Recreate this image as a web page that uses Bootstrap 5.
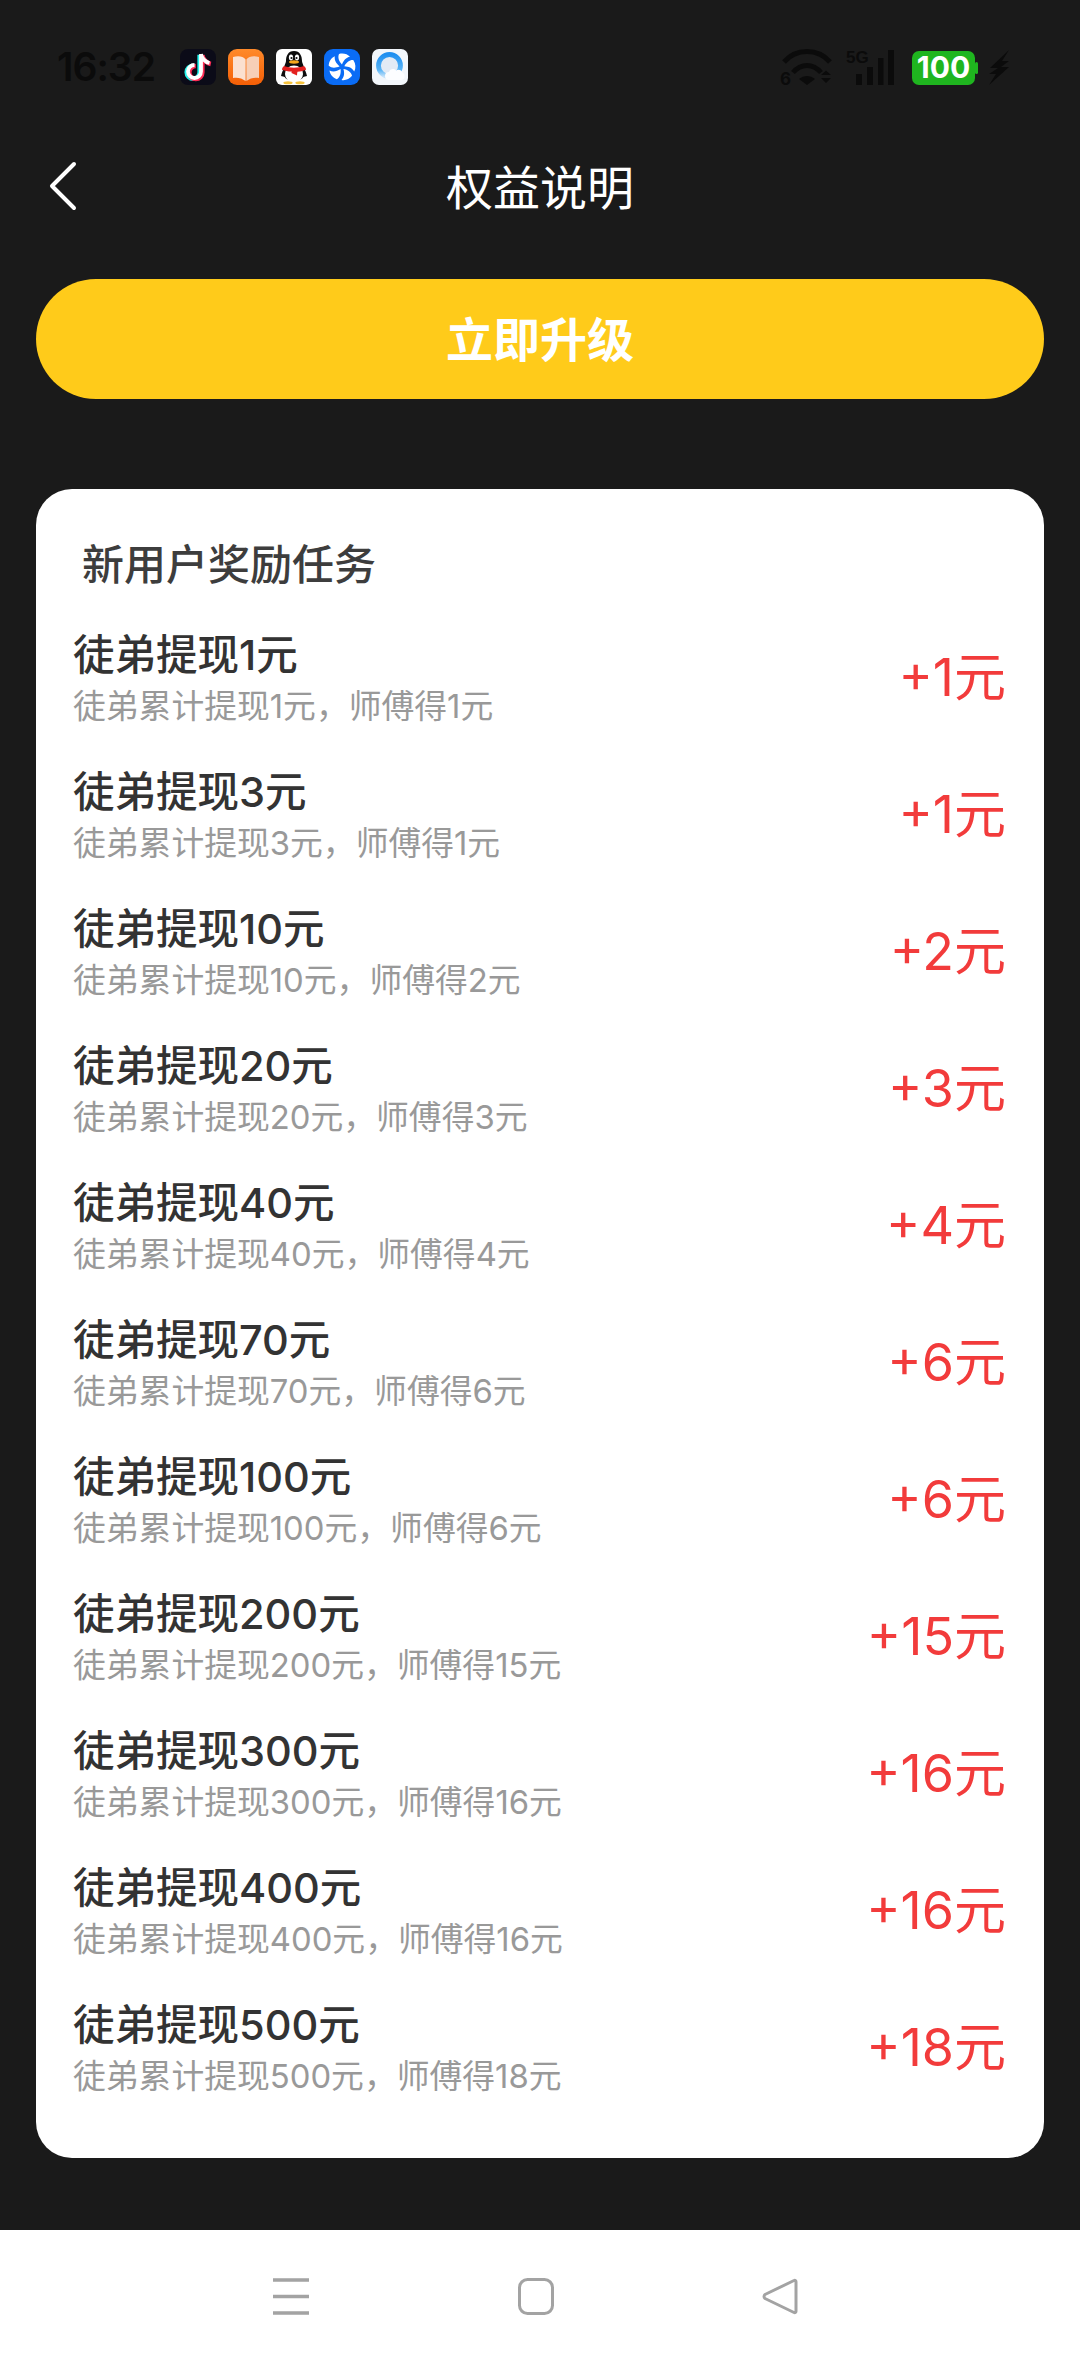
<!DOCTYPE html>
<html lang="zh-CN">
<head>
  <meta charset="UTF-8" />
  <meta name="viewport" content="width=device-width, initial-scale=1.0"/>
  <title>权益说明</title>
  <link href="https://cdn.jsdelivr.net/npm/bootstrap@5.3.3/dist/css/bootstrap.min.css" rel="stylesheet">
  <style>
    html, body { height: 100%; }
    body {
      background: #1a1a1a;
      font-family: Inter, "Noto Sans CJK SC", sans-serif;
      display: flex;
      flex-direction: column;
    }
    .status-row { padding: 49px 70px 0 57px; height: 85px; color: #0b0b0b; }
    .status-time { font-size: 39px; font-weight: 600; line-height: 36px; width: 123px; letter-spacing: -1px; }
    .app-icons { gap: 12px; }
    .app-icons svg { width: 36px; height: 36px; display: block; }
    .status-glyphs { overflow: visible; }
    .head-row { display: grid; grid-template-columns: 1fr auto 1fr; align-items: center; height: 94px; margin-top: 52px; margin-bottom: 48px; padding: 0 48px; }
    .head-back { padding-top: 3px; }
    .head-title { color: #fff; font-size: 47px; font-family: "Noto Sans CJK SC", sans-serif; font-weight: 400; margin: 0; line-height: 1; }
    .upgrade-btn {
      display: block;
      margin: 0 36px 90px;
      height: 120px;
      padding: 0 0 3px;
      background: #ffcb1a;
      border: 0;
      color: #fff;
      font-size: 47px;
      font-weight: 700;
      font-family: "Noto Sans CJK SC", sans-serif;
      border-radius: 60px;
    }
    .task-panel { margin: 0 36px; height: 1669px; border: 0; border-radius: 36px; padding: 46px 38px 0 38px; }
    .task-head { font-size: 42px; line-height: 54px; color: #3d3d3d; font-weight: 500; padding-left: 8px; margin-bottom: 22px; font-family: "Noto Sans CJK SC", sans-serif; }
    .task-row { height: 137px; }
    .task-row > div:first-child { margin-left: -1px; }
    .task-name { font-size: 41.5px; line-height: 52px; color: #333; font-weight: 500; }
    .task-desc { font-size: 32.8px; line-height: 50px; color: #999; }
    .task-amount { font-size: 52px; color: #f23b3b; line-height: 1; padding-bottom: 3px; }
    .nav-strip { margin-top: auto; height: 132px; background: #fff; padding: 48px 282px 0 273px; }
    .nav-strip svg { display: block; }
  </style>
</head>
<body>

  <!-- status bar -->
  <div class="status-row d-flex align-items-center">
    <div class="status-time">16:32</div>
    <div class="app-icons d-flex">
      <svg viewBox="0 0 36 36"><rect width="36" height="36" rx="8" fill="#0b0b18"/><g fill="none" stroke-width="4.600"><path d="M21 5v17.500a6.500 6.500 0 1 1-6.500-6.500" stroke="#25f4ee" transform="translate(-1.300 .8)"/><path d="M21 5v17.500a6.500 6.500 0 1 1-6.500-6.500M21 5c.5 4 4 8 8.500 9" stroke="#fe2c55" transform="translate(1.300 1)"/><path d="M21 5v17.500a6.500 6.500 0 1 1-6.500-6.500M21 5c.5 4 4 8 8.500 9" stroke="#fff" stroke-width="3.800"/></g></svg>
      <svg viewBox="0 0 36 36"><defs><linearGradient id="bk" x1="0" y1="0" x2="0" y2="1"><stop offset="0" stop-color="#ff8a2a"/><stop offset="1" stop-color="#f45f06"/></linearGradient></defs><rect width="36" height="36" rx="9" fill="url(#bk)"/><path d="M5 8c5-1.500 10-1 12.600 2.500V32C14 29 9 28 5 29z" fill="#fbe0d0"/><path d="M31 8c-5-1.500-10-1-12.600 2.500V32C22 29 27 28 31 29z" fill="#f7cfb6"/></svg>
      <svg viewBox="0 0 36 36"><rect width="36" height="36" rx="6" fill="#fff"/><path d="M18 2c6 0 8 5 8 10 0 2 3 7 3 11 0 5-4 9-11 9S7 28 7 23c0-4 3-9 3-11C10 7 12 2 18 2z" fill="#0d0d0d"/><path d="M5 27c1-4 2-6 3-8l3 1-2 8zM31 27c-1-4-2-6-3-8l-3 1 2 8z" fill="#0d0d0d"/><ellipse cx="18" cy="25" rx="9" ry="8.500" fill="#fff"/><ellipse cx="15" cy="8.500" rx="2.100" ry="2.900" fill="#fff"/><ellipse cx="21" cy="8.500" rx="2.100" ry="2.900" fill="#fff"/><circle cx="15.500" cy="9" r="1.100" fill="#111"/><circle cx="20.500" cy="9" r="1.100" fill="#111"/><ellipse cx="18" cy="13" rx="5" ry="1.700" fill="#f5a81c"/><path d="M8 17c6.500 2.300 13.500 2.300 20 0 1 .8 2 2.200 2 3.700-3 1.300-6 2-8.500 2l-.3 1.300-.2 2.500-5.500-2.500.2-1.500C12 22.500 9 21.800 6 20.700c0-1.500 1-3 2-3.700z" fill="#e3201f"/><ellipse cx="12" cy="33.800" rx="4.600" ry="1.500" fill="#f5c23c"/><ellipse cx="24" cy="33.800" rx="4.600" ry="1.500" fill="#f5c23c"/></svg>
      <svg viewBox="0 0 36 36"><rect width="36" height="36" rx="9" fill="#0a6cf5"/><g fill="#fff"><path id="pw" d="M18 15.500C15 12.500 13.500 8.500 15 5c4-1.200 8.500 0 11 2.800C22 8.500 19.500 11.500 18 15.500z"/><use href="#pw" transform="rotate(72 18 18)"/><use href="#pw" transform="rotate(144 18 18)"/><use href="#pw" transform="rotate(216 18 18)"/><use href="#pw" transform="rotate(288 18 18)"/></g></svg>
      <svg viewBox="0 0 36 36"><defs><linearGradient id="rg" x1="0" y1="0" x2="0" y2="1"><stop offset="0" stop-color="#1f8ff0"/><stop offset=".7" stop-color="#59b4f6"/><stop offset="1" stop-color="#c4e2fa"/></linearGradient></defs><rect width="36" height="36" rx="7" fill="#f2f6fb"/><circle cx="17.500" cy="16.500" r="11" fill="#e2eaf5" stroke="url(#rg)" stroke-width="4.800"/><path d="M17 31a4 4 0 0 1 0-8c.8-3 5-4 7-1.500 2-1.500 6-.5 6.500 2.500 3 .5 3 7-1 7z" fill="#fcfdff"/></svg>
    </div>
    <div class="ms-auto d-flex align-items-center">
      <svg width="230" height="38" viewBox="0 0 230 38" class="d-block status-glyphs">
        <!-- wifi -->
        <g fill="none" stroke="#0b0b0b" stroke-width="5">
          <path d="M4 14C16 0 38 0 50 14"/>
          <path d="M13 24.500C21 15 33 15 41 24.500"/>
        </g>
        <path d="M19 31C24 27 30 27 35 31L27 37z" fill="#0b0b0b"/>
        <text x="0" y="37" font-size="17" font-weight="700" fill="#0b0b0b" font-family="Inter">6</text>
        <path d="M41 27l5-4.500 5 4.500zM41 30h10l-5 5z" fill="#0b0b0b"/>
        <!-- 5g and bars -->
        <text x="66" y="15" font-size="17" font-weight="700" fill="#0b0b0b" font-family="'Liberation Sans'">5G</text>
        <rect x="76" y="26" width="6" height="11" fill="#0b0b0b"/>
        <rect x="87" y="19" width="6" height="18" fill="#0b0b0b"/>
        <rect x="98" y="10" width="5.500" height="27" fill="#0b0b0b"/>
        <rect x="108" y="2" width="6" height="35" fill="#0b0b0b"/>
        <!-- battery -->
        <rect x="132" y="3" width="63" height="34" rx="7" fill="#1fb51f"/>
        <rect x="195" y="14" width="3" height="12" rx="1.500" fill="#1fb51f"/>
        <text x="163.500" y="30" font-size="30" font-weight="700" fill="#fff" text-anchor="middle" font-family="Inter">100</text>
        <!-- bolt -->
        <path d="M229 2L210 20h8l-9 6h7l-7 11 20-18h-8l8-6h-7z" fill="#0b0b0b"/>
      </svg>
    </div>
  </div>

  <!-- header -->
  <div class="head-row">
    <div class="head-back">
      <svg width="30" height="52" viewBox="0 0 30 52" class="d-block"><path d="M26 4L4 26l22 22" fill="none" stroke="#fff" stroke-width="4" stroke-linecap="round" stroke-linejoin="round"/></svg>
    </div>
    <h1 class="head-title">权益说明</h1>
    <div></div>
  </div>

  <button type="button" class="btn upgrade-btn">立即升级</button>

  <div class="card task-panel">
    <div class="task-head">新用户奖励任务</div>

    <div class="task-row d-flex justify-content-between align-items-center">
      <div><div class="task-name">徒弟提现1元</div><div class="task-desc">徒弟累计提现1元，师傅得1元</div></div>
      <div class="task-amount">+1元</div>
    </div>
    <div class="task-row d-flex justify-content-between align-items-center">
      <div><div class="task-name">徒弟提现3元</div><div class="task-desc">徒弟累计提现3元，师傅得1元</div></div>
      <div class="task-amount">+1元</div>
    </div>
    <div class="task-row d-flex justify-content-between align-items-center">
      <div><div class="task-name">徒弟提现10元</div><div class="task-desc">徒弟累计提现10元，师傅得2元</div></div>
      <div class="task-amount">+2元</div>
    </div>
    <div class="task-row d-flex justify-content-between align-items-center">
      <div><div class="task-name">徒弟提现20元</div><div class="task-desc">徒弟累计提现20元，师傅得3元</div></div>
      <div class="task-amount">+3元</div>
    </div>
    <div class="task-row d-flex justify-content-between align-items-center">
      <div><div class="task-name">徒弟提现40元</div><div class="task-desc">徒弟累计提现40元，师傅得4元</div></div>
      <div class="task-amount">+4元</div>
    </div>
    <div class="task-row d-flex justify-content-between align-items-center">
      <div><div class="task-name">徒弟提现70元</div><div class="task-desc">徒弟累计提现70元，师傅得6元</div></div>
      <div class="task-amount">+6元</div>
    </div>
    <div class="task-row d-flex justify-content-between align-items-center">
      <div><div class="task-name">徒弟提现100元</div><div class="task-desc">徒弟累计提现100元，师傅得6元</div></div>
      <div class="task-amount">+6元</div>
    </div>
    <div class="task-row d-flex justify-content-between align-items-center">
      <div><div class="task-name">徒弟提现200元</div><div class="task-desc">徒弟累计提现200元，师傅得15元</div></div>
      <div class="task-amount">+15元</div>
    </div>
    <div class="task-row d-flex justify-content-between align-items-center">
      <div><div class="task-name">徒弟提现300元</div><div class="task-desc">徒弟累计提现300元，师傅得16元</div></div>
      <div class="task-amount">+16元</div>
    </div>
    <div class="task-row d-flex justify-content-between align-items-center">
      <div><div class="task-name">徒弟提现400元</div><div class="task-desc">徒弟累计提现400元，师傅得16元</div></div>
      <div class="task-amount">+16元</div>
    </div>
    <div class="task-row d-flex justify-content-between align-items-center">
      <div><div class="task-name">徒弟提现500元</div><div class="task-desc">徒弟累计提现500元，师傅得18元</div></div>
      <div class="task-amount">+18元</div>
    </div>
  </div>

  <!-- bottom nav -->
  <div class="nav-strip d-flex justify-content-between">
    <svg width="36" height="37" viewBox="0 0 36 37"><path d="M0 2h36M0 18.500h36M0 35h36" stroke="#a3a3a3" stroke-width="3.500"/></svg>
    <svg width="36" height="37" viewBox="0 0 36 37"><rect x="1.500" y="1.500" width="33" height="34" rx="8" fill="none" stroke="#a3a3a3" stroke-width="3"/></svg>
    <svg width="36" height="37" viewBox="0 0 36 37"><path d="M32 2.500c1-.6 2 0 2 1.200v29.600c0 1.200-1 1.800-2 1.200L3 20.500c-1.300-1-1.300-3 0-4z" fill="none" stroke="#a3a3a3" stroke-width="3" stroke-linejoin="round"/></svg>
  </div>

  <script src="https://cdn.jsdelivr.net/npm/bootstrap@5.3.3/dist/js/bootstrap.bundle.min.js"></script>
</body>
</html>
